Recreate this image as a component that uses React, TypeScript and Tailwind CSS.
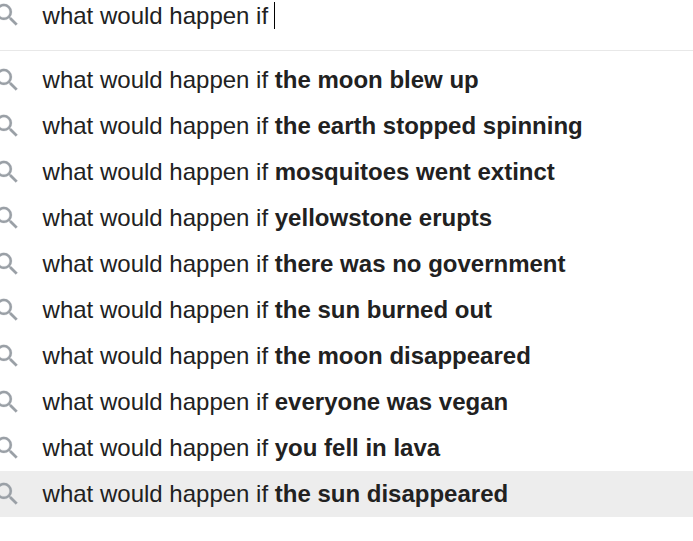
const endings = [
  'the moon blew up',
  'the earth stopped spinning',
  'mosquitoes went extinct',
  'yellowstone erupts',
  'there was no government',
  'the sun burned out',
  'the moon disappeared',
  'everyone was vegan',
  'you fell in lava',
  'the sun disappeared',
];

function SearchIcon() {
  return (
    <svg viewBox="0 0 24 24" className="mb-px -ml-[8.5px] size-[30px] shrink-0 fill-[#9aa0a6] stroke-[#9aa0a6] stroke-[0.15]">
      <path d="M15.5 14h-.79l-.28-.27A6.471 6.471 0 0 0 16 9.5 6.5 6.5 0 1 0 9.5 16c1.61 0 3.09-.59 4.23-1.57l.27.28v.79l5 4.99L20.49 19l-4.99-5zm-6 0C7.01 14 5 11.99 5 9.5S7.01 5 9.5 5 14 7.01 14 9.5 11.99 14 9.5 14z" />
    </svg>
  );
}

export default function App() {
  return (
    <main className="flex h-[541px] w-full flex-col overflow-hidden bg-white font-['Liberation_Sans',Arial,sans-serif] text-[24px] leading-[46px] text-[#212121]">
      <div className="flex h-[51px] shrink-0 items-start border-b border-[#e8e8e8]">
        <div className="flex h-[31px] items-center">
          <SearchIcon />
          <span className="ml-[21.1px] whitespace-pre">what would happen if </span>
          <span className="-ml-[0.6px] h-[27px] w-px bg-black" />
        </div>
      </div>
      <ul className="mt-[6px]">
        {endings.map((ending, i) => (
          <li key={ending} className={`flex h-[46px] items-center ${i === 9 ? 'bg-[#ededed]' : ''}`}>
            <SearchIcon />
            <span className="ml-[21.1px] whitespace-pre">
              what would happen if <b>{ending}</b>
            </span>
          </li>
        ))}
      </ul>
    </main>
  );
}
